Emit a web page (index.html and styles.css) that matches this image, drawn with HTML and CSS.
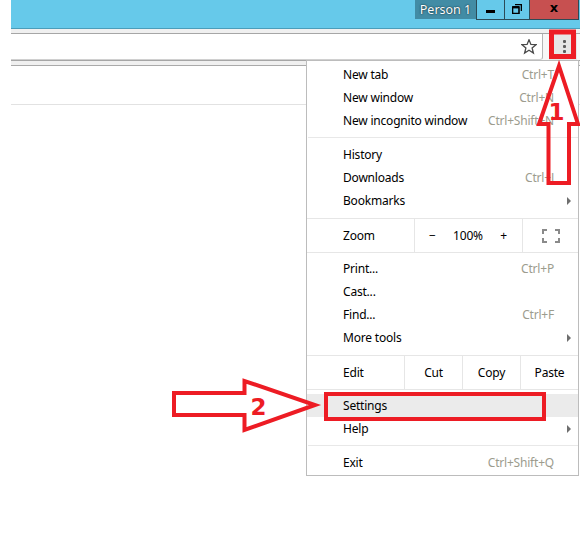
FILE: index.html
```html
<!DOCTYPE html>
<html>
<head>
<meta charset="utf-8">
<link rel="stylesheet" href="styles.css">
</head>
<body>
<div class="screen">
  <div class="window">
    <header class="titlebar">
      <div class="person">Person 1</div>
      <div class="winbtn min"><span class="min-bar"></span></div>
      <div class="winbtn restore">
        <svg width="10" height="10" viewBox="0 0 10 10"><path d="M3 0.5 H9.5 V7 M0.5 3 H7 V9.5 H0.5 Z" fill="none" stroke="#000" stroke-width="1.6"/><path d="M0.5 3.2 H7" stroke="#000" stroke-width="2.4"/></svg>
      </div>
      <div class="winbtn close">x</div>
    </header>
    <div class="tabstrip"></div>
    <div class="toolbar">
      <div class="omnibox">
        <svg class="star" width="16" height="16" viewBox="0 0 16 16"><polygon points="8,0.8 9.9,5.4 15,5.7 11.1,9 12.4,14 8,11.3 3.6,14 4.9,9 1,5.7 6.1,5.4" fill="none" stroke="#4a4a4a" stroke-width="1.3" stroke-linejoin="miter"/></svg>
      </div>
      <div class="menu-btn"><span class="dots"><i></i><i></i><i></i></span></div>
    </div>
    <div class="bookmarks"></div>
    <div class="content"></div>
  </div>

  <div class="menu">
    <div class="item"><span>New tab</span><span class="key">Ctrl+T</span></div>
    <div class="item"><span>New window</span><span class="key">Ctrl+N</span></div>
    <div class="item"><span>New incognito window</span><span class="key">Ctrl+Shift+N</span></div>
    <div class="sep"></div>
    <div class="item sub"><span>History</span><span class="arrow"></span></div>
    <div class="item"><span>Downloads</span><span class="key">Ctrl+J</span></div>
    <div class="item sub"><span>Bookmarks</span><span class="arrow"></span></div>
    <div class="split zoom">
      <div class="label">Zoom</div>
      <div class="cell zoom-ctl"><span>−</span><span>100%</span><span>+</span></div>
      <div class="cell fs">
        <svg width="18" height="14" viewBox="0 0 18 14"><path d="M1 5 V1 H5 M13 1 H17 V5 M17 9 V13 H13 M5 13 H1 V9" fill="none" stroke="#8a8a8a" stroke-width="2"/></svg>
      </div>
    </div>
    <div class="item first-after-split"><span>Print...</span><span class="key">Ctrl+P</span></div>
    <div class="item"><span>Cast...</span></div>
    <div class="item"><span>Find...</span><span class="key">Ctrl+F</span></div>
    <div class="item sub"><span>More tools</span><span class="arrow"></span></div>
    <div class="split edit">
      <div class="label">Edit</div>
      <div class="cell">Cut</div>
      <div class="cell">Copy</div>
      <div class="cell">Paste</div>
    </div>
    <div class="item hover first-after-split"><span>Settings</span></div>
    <div class="item sub"><span>Help</span><span class="arrow"></span></div>
    <div class="sep"></div>
    <div class="item"><span>Exit</span><span class="key">Ctrl+Shift+Q</span></div>
  </div>

  <svg class="annotations" width="580" height="553" viewBox="0 0 580 553">
    <rect x="551.5" y="32" width="22" height="24.5" fill="none" stroke="#ed1c24" stroke-width="5"/>
    <polygon points="559,66 578,124 569,124 569,183 548.5,183 548.5,124 539,124" fill="none" stroke="#ed1c24" stroke-width="4" stroke-linejoin="miter"/>
    <text x="556.5" y="120" class="num" text-anchor="middle">1</text>
    <polygon points="174,393 244.5,393 244.5,381 315,405 244.5,430 244.5,415 174,415" fill="none" stroke="#ed1c24" stroke-width="4" stroke-linejoin="miter"/>
    <text x="258.5" y="415" class="num" text-anchor="middle">2</text>
    <rect x="326" y="394" width="218" height="25" fill="none" stroke="#ed1c24" stroke-width="4"/>
  </svg>
</div>
</body>
</html>
```

FILE: styles.css
```css
* { box-sizing: border-box; }
html, body { margin: 0; padding: 0; background: #fff; }
body {
  font-family: "Noto Sans", "Open Sans", sans-serif;
  font-size: 12px;
  color: #000;
}
.screen {
  position: relative;
  width: 580px;
  height: 553px;
  overflow: hidden;
  background: #fff;
}
.window {
  margin-left: 11px;
  width: 569px;
}
.titlebar {
  height: 29px;
  background: #66c9ea;
  border-bottom: 1px solid #4b9dba;
  display: flex;
  justify-content: flex-end;
  align-items: flex-start;
  padding-right: 1px;
}
.person {
  height: 19px;
  width: 61px;
  background: #428ca5;
  color: #fff;
  font-size: 12.5px;
  line-height: 19px;
  text-align: center;
  text-shadow: 0 0 2px #173c48, 0 0 1px #173c48;
}
.winbtn {
  height: 20px;
  border-left: 1px solid #2c4b57;
  border-bottom: 1px solid #2c4b57;
  background: #66c9ea;
  display: flex;
  align-items: center;
  justify-content: center;
}
.winbtn.min { width: 28px; align-items: flex-start; }
.min-bar {
  display: block;
  width: 9px;
  height: 3px;
  background: #000;
  margin-top: 10px;
}
.winbtn.restore { width: 25px; }
.winbtn.restore svg { margin-top: -1px; }
.winbtn.close {
  width: 50px;
  background: #c75050;
  border-right: 1px solid #2c4b57;
  font-family: "DejaVu Sans", sans-serif;
  font-weight: bold;
  font-size: 13px;
  line-height: 1;
  padding-bottom: 4px;
}
.tabstrip {
  height: 4px;
  background: #f0f0f0;
}
.toolbar {
  height: 28px;
  display: flex;
  background: #f7f7f7;
  border-top: 1px solid #a6a6a6;
  border-bottom: 1px solid #a6a6a6;
}
.omnibox {
  width: 532px;
  height: 26px;
  background: #fff;
  border-right: 1px solid #b4b4b4;
  border-bottom: 1px solid #d0d0d0;
  border-bottom-right-radius: 3px;
  display: flex;
  align-items: center;
  justify-content: flex-end;
  padding-right: 5px;
}
.star { display: block; margin-top: 1px; }
.menu-btn {
  margin-left: 6px;
  width: 28px;
  height: 26px;
  background: #e6e6e6;
  display: flex;
  align-items: center;
  justify-content: center;
}
.dots { display: flex; flex-direction: column; gap: 2px; margin-left: 2px; margin-top: -1px; }
.dots i { display: block; width: 3px; height: 3px; background: #5c5c5c; border-radius: 1px; }
.bookmarks {
  height: 5px;
  background: #f0f0f0;
  border-bottom: 1px solid #aaaaaa;
}
.content {
  height: 39px;
  border-bottom: 1px solid #e2e2e2;
}

/* menu */
.menu {
  position: absolute;
  left: 306px;
  top: 60px;
  width: 273px;
  background: #fff;
  border: 1px solid #bcbcbc;
  padding: 2px 0 1px;
  letter-spacing: -0.2px;
}
.item {
  height: 23px;
  display: flex;
  align-items: center;
  padding: 0 24px 0 36px;
  white-space: nowrap;
}
.item.sub { padding-right: 7px; }
.item.hover { background: #ebebeb; }
.key {
  margin-left: auto;
  color: #9c9c8e;
}
.arrow {
  margin-left: auto;
  width: 0;
  height: 0;
  border-left: 4px solid #6e6e6e;
  border-top: 4px solid transparent;
  border-bottom: 4px solid transparent;
}
.sep {
  height: 1px;
  background: #e8e8e8;
  margin: 5px 0 5px 1px;
}
.split {
  display: flex;
  height: 35px;
  border-top: 1px solid #e6e6e6;
  border-bottom: 1px solid #e6e6e6;
  margin-top: 6px;
}
.split .label {
  display: flex;
  align-items: center;
  padding-left: 36px;
}
.split.zoom .label { width: 107px; }
.split.edit .label { width: 97px; }
.cell {
  border-left: 1px solid #e6e6e6;
  display: flex;
  align-items: center;
  justify-content: center;
}
.edit .cell { width: 58px; }
.zoom-ctl {
  width: 108px;
  justify-content: space-between;
  padding: 0 15px 0 14px;
}
.fs { width: 56px; }
.fs svg { display: block; margin-left: 1px; }
.first-after-split { margin-top: 4px; }

.annotations {
  position: absolute;
  left: 0;
  top: 0;
  pointer-events: none;
}
.num {
  font-family: "DejaVu Sans", sans-serif;
  font-weight: bold;
  font-size: 23px;
  fill: #ed1c24;
}
```
